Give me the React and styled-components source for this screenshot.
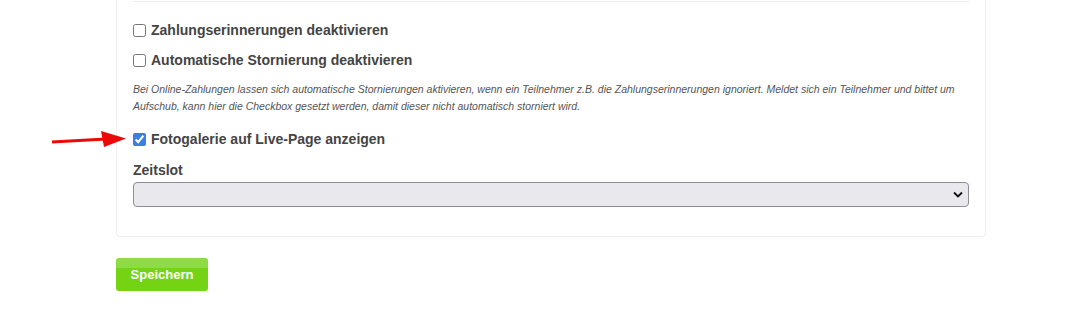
import React from "react";
import styled, { createGlobalStyle } from "styled-components";

const Global = createGlobalStyle`
  html, body { margin: 0; padding: 0; background: #fff; }
  body { font-family: "Liberation Sans", Arial, sans-serif; color: #444; }
`;

const Page = styled.div`
  position: relative;
  padding: 0 82px 0 116px;
  width: 1067px;
  box-sizing: border-box;
`;

const Card = styled.section`
  width: 870px;
  box-sizing: border-box;
  border: 1px solid #efefef;
  border-top: none;
  border-radius: 0 0 4px 4px;
  padding: 0 16px 29px;
  display: flex;
  flex-direction: column;
`;

const Divider = styled.hr`
  margin: 1px 0 0;
  border: none;
  border-top: 1px solid #eeeeee;
  height: 0;
`;

const CheckRow = styled.label`
  display: flex;
  align-items: center;
  gap: 5px;
  height: 20px;
  margin-top: ${(p) => p.$top}px;
  font-size: 14px;
  font-weight: bold;
  color: #444;
  cursor: pointer;
`;

const Box = styled.input`
  width: 13px;
  height: 13px;
  margin: 0;
  flex: none;
  accent-color: #3b7fe3;
`;

const Help = styled.p`
  margin: 11px 0 0;
  font-size: 10.5px;
  line-height: 17px;
  font-style: italic;
  color: #555;
`;

const FieldLabel = styled.div`
  margin-top: 11px;
  font-size: 14px;
  font-weight: bold;
  line-height: 20px;
  color: #444;
`;

const SelectWrap = styled.div`
  position: relative;
  margin-top: 2px;
`;

const Select = styled.select`
  appearance: none;
  display: block;
  width: 100%;
  height: 25px;
  box-sizing: border-box;
  background: #e9e8ed;
  border: 1px solid #8e8c96;
  border-radius: 4px;
  font-family: inherit;
  font-size: 13px;
`;

const Chevron = styled.svg`
  position: absolute;
  right: 6px;
  top: 9px;
  pointer-events: none;
`;

const SaveButton = styled.button`
  margin-top: 21px;
  width: 92px;
  height: 33px;
  border: none;
  border-radius: 3px;
  background: linear-gradient(#8ddc46 0, #8ddc46 10px, #74d414 10px, #74d414 100%);
  color: #fff;
  font-family: "Liberation Sans", Arial, sans-serif;
  font-weight: bold;
  font-size: 13px;
  padding: 0;
  cursor: pointer;
`;

const Arrow = styled.svg`
  position: absolute;
  left: 50px;
  top: 128px;
`;

export default function App() {
  return (
    <>
      <Global />
      <Page>
        <Arrow width="80" height="22" viewBox="0 0 80 22">
          <line x1="2" y1="14" x2="56" y2="11" stroke="#ea0a0a" strokeWidth="3" />
          <polygon points="51,3 76,10.5 54,19" fill="#ea0a0a" />
        </Arrow>
        <Card>
          <Divider />
          <CheckRow $top={18}>
            <Box type="checkbox" />
            Zahlungserinnerungen deaktivieren
          </CheckRow>
          <CheckRow $top={10}>
            <Box type="checkbox" />
            Automatische Stornierung deaktivieren
          </CheckRow>
          <Help>
            Bei Online-Zahlungen lassen sich automatische Stornierungen aktivieren, wenn ein Teilnehmer z.B. die Zahlungserinnerungen ignoriert. Meldet sich ein Teilnehmer und bittet um Aufschub, kann hier die Checkbox gesetzt werden, damit dieser nicht automatisch storniert wird.
          </Help>
          <CheckRow $top={14}>
            <Box type="checkbox" defaultChecked />
            Fotogalerie auf Live-Page anzeigen
          </CheckRow>
          <FieldLabel>Zeitslot</FieldLabel>
          <SelectWrap>
            <Select defaultValue="">
              <option value=""></option>
            </Select>
            <Chevron width="10" height="7" viewBox="0 0 10 7">
              <polyline points="1,1.5 5,5.5 9,1.5" fill="none" stroke="#111" strokeWidth="1.8" />
            </Chevron>
          </SelectWrap>
        </Card>
        <SaveButton type="button">Speichern</SaveButton>
      </Page>
    </>
  );
}
